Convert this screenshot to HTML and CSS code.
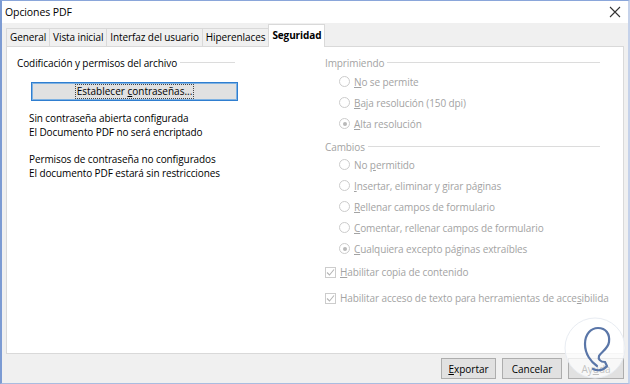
FILE: index.html
```html
<!DOCTYPE html>
<html lang="es">
<head>
<meta charset="utf-8">
<title>Opciones PDF</title>
<link rel="stylesheet" href="styles.css">
</head>
<body>
<div class="window">
  <div class="titlebar">
    <span class="title">Opciones PDF</span>
    <svg class="close" width="12" height="12" viewBox="0 0 12 12"><path d="M1 1 L11 11 M11 1 L1 11" stroke="#333" stroke-width="1.1" fill="none"/></svg>
  </div>
  <div class="client">
    <div class="tabs">
      <div class="tab">General</div>
      <div class="tab">Vista inicial</div>
      <div class="tab">Interfaz del usuario</div>
      <div class="tab">Hiperenlaces</div>
      <div class="tab active">Seguridad</div>
    </div>
    <div class="panel">
      <div class="col left">
        <div class="group-head">Codificación y permisos del archivo</div>
        <button class="btn wide"><span class="focus">Establecer <u>c</u>ontraseñas...</span></button>
        <p class="info">Sin contraseña abierta configurada<br>El Documento PDF no será encriptado</p>
        <p class="info">Permisos de contraseña no configurados<br>El documento PDF estará sin restricciones</p>
      </div>
      <div class="col right disabled">
        <div class="group-head">Imprimiendo</div>
        <div class="opts print">
          <div class="opt"><span class="radio"></span><span><u>N</u>o se permite</span></div>
          <div class="opt"><span class="radio"></span><span><u>B</u>aja resolución (150 dpi)</span></div>
          <div class="opt"><span class="radio on"></span><span><u>A</u>lta resolución</span></div>
        </div>
        <div class="group-head">Cambios</div>
        <div class="opts changes">
          <div class="opt"><span class="radio"></span><span>No <u>p</u>ermitido</span></div>
          <div class="opt"><span class="radio"></span><span><u>I</u>nsertar, eliminar y girar páginas</span></div>
          <div class="opt"><span class="radio"></span><span><u>R</u>ellenar campos de formulario</span></div>
          <div class="opt"><span class="radio"></span><span><u>C</u>omentar, rellenar campos de formulario</span></div>
          <div class="opt"><span class="radio on"></span><span><u>C</u>ualquiera excepto páginas extraíbles</span></div>
        </div>
        <div class="checks">
          <div class="chk"><span class="box"><svg width="9" height="9" viewBox="0 0 9 9"><path d="M1 4.5 L3.5 7 L8 1.5" stroke="#b5b5b5" stroke-width="1.1" fill="none"/></svg></span><span><u>H</u>abilitar copia de contenido</span></div>
          <div class="chk"><span class="box"><svg width="9" height="9" viewBox="0 0 9 9"><path d="M1 4.5 L3.5 7 L8 1.5" stroke="#b5b5b5" stroke-width="1.1" fill="none"/></svg></span><span>Habilitar acceso de texto para herramientas de acce<u>s</u>ibilida</span></div>
        </div>
      </div>
    </div>
    <div class="buttons">
      <button class="btn"><u>E</u>xportar</button>
      <button class="btn">Cancelar</button>
      <button class="btn">Ay<u>u</u>da</button>
    </div>
  </div>
  <svg class="watermark" width="64" height="64" viewBox="0 0 64 64">
    <circle cx="32" cy="32" r="30" fill="rgba(255,255,255,0.75)" stroke="#e8ecf2" stroke-width="1"/>
    <path d="M34 50 C28 46 22 38 22 28 C22 18 28 12 35 12 C43 12 47 18 46 26 C45 33 38 36 36 40 C35 43 37 46 42 46 L44 50 C40 55 34 55 30 53" stroke="#5a76a8" stroke-width="2.2" fill="none" stroke-linecap="round"/>
  </svg>
</div>
</body>
</html>
```
FILE: styles.css
```css
* { box-sizing: border-box; }
html, body { margin: 0; padding: 0; }
body {
  width: 630px;
  height: 384px;
  overflow: hidden;
  font-family: "Open Sans", "Noto Sans", sans-serif;
  font-size: 10px;
  letter-spacing: -0.1px;
  color: #000;
  background: #f0f0f0;
}
.window {
  position: relative;
  width: 630px;
  height: 384px;
  border-left: 2px solid #7c9bd3;
  border-top: 1px solid #8aa6da;
  border-right: 2px solid #c5d2ea;
  border-bottom: 1px solid #a9bce0;
  display: flex;
  flex-direction: column;
}
.titlebar {
  height: 22px;
  background: #fff;
  display: flex;
  align-items: center;
  justify-content: space-between;
  padding: 0 7px 0 3px;
  flex: none;
}
.title { font-size: 10.5px; }
.close { display: block; }
.client {
  flex: 1;
  background: #f0f0f0;
  padding: 1px 4px 0 4px;
  display: flex;
  flex-direction: column;
}
.tabs {
  display: flex;
  align-items: flex-end;
  height: 22px;
  position: relative;
  z-index: 1;
}
.tab {
  height: 18px;
  line-height: 16px;
  padding: 0 3px;
  border: 1px solid #d9d9d9;
  border-bottom: none;
  margin-right: -1px;
  background: #f0f0f0;
}
.tab.active {
  height: 23px;
  line-height: 20px;
  background: #fff;
  font-weight: bold;
  margin-bottom: -1px;
}
.panel {
  height: 308px;
  background: #fff;
  border: 1px solid #d9d9d9;
  display: flex;
  padding: 8px 0 0 10px;
}
.col.left { width: 308px; }
.col.right { width: 275px; }
.group-head {
  display: flex;
  align-items: center;
  height: 15px;
}
.group-head::after {
  content: "";
  flex: 1;
  height: 1px;
  background: #dcdcdc;
  margin-left: 3px;
}
.left .group-head { width: 218px; }
.btn {
  font: inherit;
  color: #000;
  background: #e1e1e1;
  border: 1px solid #adadad;
  padding: 0;
  height: 21px;
}
.btn.wide {
  display: flex;
  justify-content: center;
  align-items: center;
  width: 207px;
  height: 19px;
  margin: 12px 0 0 14px;
  border: 1px solid #2f7ed0;
  box-shadow: inset 0 0 0 1px #7fb2e2;
}
.focus {
  outline: 1px dotted #444;
  padding: 0 1px;
  line-height: 13px;
}
u { text-decoration: underline; text-underline-offset: 1px; }
.info {
  margin: 10px 0 0 12px;
  line-height: 14px;
}
.info + .info { margin-top: 13px; }
.disabled { color: #a3a3a3; }
.opts { padding-left: 14px; }
.opt {
  display: flex;
  align-items: center;
  height: 21px;
}
.opts.print { margin-top: 1px; }
.opts.changes { margin-top: 0; }
.opts.print + .group-head { margin-top: 5px; }
.radio {
  width: 11px;
  height: 11px;
  border-radius: 50%;
  border: 1px solid #cccccc;
  background: #fff;
  margin-right: 4px;
  position: relative;
  flex: none;
}
.radio.on::after {
  content: "";
  position: absolute;
  left: 2.5px;
  top: 2.5px;
  width: 4px;
  height: 4px;
  border-radius: 50%;
  background: #b9b9b9;
}
.checks { margin-top: 0; }
.chk {
  display: flex;
  align-items: center;
  height: 26px;
  white-space: nowrap;
}
.box {
  width: 11px;
  height: 11px;
  border: 1px solid #cccccc;
  margin-right: 4px;
  display: flex;
  align-items: center;
  justify-content: center;
  flex: none;
}
.buttons {
  display: flex;
  justify-content: flex-end;
  gap: 6px;
  padding: 4px 0 0 0;
}
.buttons .btn { height: 21px; }
.buttons .btn:nth-child(1) { width: 55px; }
.buttons .btn:nth-child(2) { width: 60px; }
.buttons .btn:nth-child(3) { width: 56px; }
.watermark {
  position: absolute;
  right: 1px;
  bottom: 3px;
}
```
